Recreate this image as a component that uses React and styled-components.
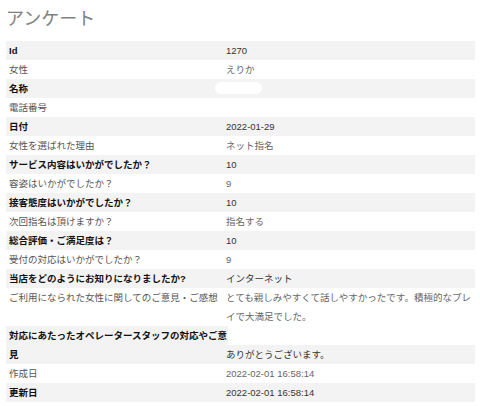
import styled, { createGlobalStyle } from "styled-components";

const GlobalStyle = createGlobalStyle`
  html, body {
    margin: 0;
    padding: 0;
    background: #fff;
  }
  body {
    font-family: "Liberation Sans", Arial, "Noto Sans CJK JP", sans-serif;
  }
`;

const rows = [
  { label: "Id", value: "1270" },
  { label: "女性", value: "えりか" },
  { label: "名称", value: "", masked: true },
  { label: "電話番号", value: "" },
  { label: "日付", value: "2022-01-29" },
  { label: "女性を選ばれた理由", value: "ネット指名" },
  { label: "サービス内容はいかがでしたか？", value: "10" },
  { label: "容姿はいかがでしたか？", value: "9" },
  { label: "接客態度はいかがでしたか？", value: "10" },
  { label: "次回指名は頂けますか？", value: "指名する" },
  { label: "総合評価・ご満足度は？", value: "10" },
  { label: "受付の対応はいかがでしたか？", value: "9" },
  { label: "当店をどのようにお知りになりましたか?", value: "インターネット" },
  {
    label: "ご利用になられた女性に関してのご意見・ご感想",
    value: "とても親しみやすくて話しやすかったです。積極的なプレイで大満足でした。",
  },
  {
    label: "見",
    lead: "対応にあたったオペレータースタッフの対応やご意",
    value: "ありがとうございます。",
  },
  { label: "作成日", value: "2022-02-01 16:58:14" },
  { label: "更新日", value: "2022-02-01 16:58:14" },
];

export default function App() {
  return (
    <>
      <GlobalStyle />
      <Page>
        <Title>アンケート</Title>
        <Sheet>
          {rows.map((row, i) => {
            const odd = i % 2 === 0;
            return (
              <RowGroup key={row.label}>
                {row.lead && (
                  <LeadLine>
                    <LeadLabel>{row.lead}</LeadLabel>
                  </LeadLine>
                )}
                <Row $odd={odd}>
                  <Label $odd={odd}>{row.label}</Label>
                  <Value $odd={odd}>
                    {row.masked ? <Mask /> : row.value}
                  </Value>
                </Row>
              </RowGroup>
            );
          })}
        </Sheet>
      </Page>
    </>
  );
}

const Page = styled.div`
  padding: 4px 5px 10px 6px;
`;

const Title = styled.h1`
  margin: 0 0 11px 0;
  padding-left: 0;
  font-family: "Noto Sans CJK JP", sans-serif;
  font-size: 18px;
  line-height: 26px;
  font-weight: normal;
  color: #808080;
`;

const Sheet = styled.div`
  display: flex;
  flex-direction: column;
  font-size: 9.5px;
  line-height: 19px;
`;

const RowGroup = styled.div`
  display: flex;
  flex-direction: column;
`;

const Row = styled.div`
  display: grid;
  grid-template-columns: 220px 1fr;
  background: ${({ $odd }) => ($odd ? "#f3f3f3" : "#fff")};
`;

const Label = styled.div`
  padding-left: 3px;
  font-weight: ${({ $odd }) => ($odd ? "bold" : "normal")};
  color: ${({ $odd }) => ($odd ? "#111" : "#555")};
`;

const Value = styled.div`
  padding-right: 2px;
  color: ${({ $odd }) => ($odd ? "#333" : "#666")};
`;

const LeadLine = styled.div`
  display: flex;
`;

const LeadLabel = styled.span`
  padding: 0 1px 0 3px;
  background: #f3f3f3;
  font-weight: bold;
  color: #111;
  white-space: nowrap;
`;

const Mask = styled.span`
  display: inline-block;
  vertical-align: middle;
  margin: -2px 0 0 -11px;
  width: 47px;
  height: 12px;
  border-radius: 6px;
  background: #fff;
`;
